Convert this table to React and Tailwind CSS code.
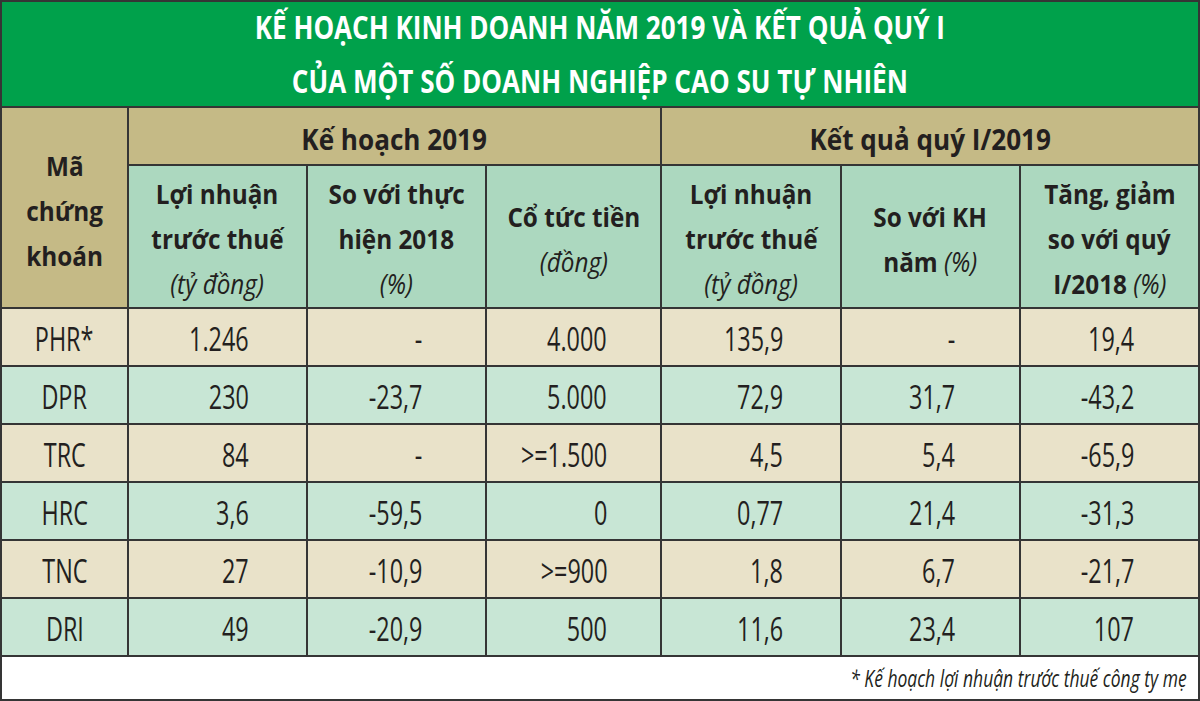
import React from "react";

const rows = [
  ["PHR*", "1.246", "-", "4.000", "135,9", "-", "19,4"],
  ["DPR", "230", "-23,7", "5.000", "72,9", "31,7", "-43,2"],
  ["TRC", "84", "-", ">=1.500", "4,5", "5,4", "-65,9"],
  ["HRC", "3,6", "-59,5", "0", "0,77", "21,4", "-31,3"],
  ["TNC", "27", "-10,9", ">=900", "1,8", "6,7", "-21,7"],
  ["DRI", "49", "-20,9", "500", "11,6", "23,4", "107"],
];

const pr = ["", "pr-[57px]", "pr-[63px]", "pr-[53px]", "pr-[57px]", "pr-[64px]", "pr-[64px]"];

function H({ children }) {
  return <span className="inline-block whitespace-nowrap scale-x-[0.9] origin-center">{children}</span>;
}

export default function App() {
  return (
    <div className="w-[1200px] h-[701px] bg-[#353535] p-[2px] font-['Open_Sans',sans-serif] text-[#231f20]">
      <div className="grid h-full gap-[2px] grid-cols-[125px_177px_177px_173px_178px_177px_177px] grid-rows-[104px_56px_141px_56px_56px_56px_56px_56px_56px_1fr]">
        <div className="col-span-7 bg-[#00a14b] flex flex-col items-center justify-center gap-[4px] text-white font-bold text-[33px] leading-[50px]">
          <span className="inline-block whitespace-nowrap scale-x-[0.79] origin-center">KẾ HOẠCH KINH DOANH NĂM 2019 VÀ KẾT QUẢ QUÝ I</span>
          <span className="inline-block whitespace-nowrap scale-x-[0.79] origin-center">CỦA MỘT SỐ DOANH NGHIỆP CAO SU TỰ NHIÊN</span>
        </div>
        <div className="row-span-2 bg-[#c5ba86] flex flex-col items-center justify-center font-bold text-[27px] leading-[45px] text-center pt-[5px]">
          <H>Mã</H>
          <H>chứng</H>
          <H>khoán</H>
        </div>
        <div className="col-span-3 bg-[#c5ba86] flex items-center justify-center font-bold text-[29px] pt-[6px]">
          <H>Kế hoạch 2019</H>
        </div>
        <div className="col-span-3 bg-[#c5ba86] flex items-center justify-center font-bold text-[29px] pt-[6px]">
          <H>Kết quả quý I/2019</H>
        </div>

        <div className="bg-[#acd8bf] flex flex-col items-center justify-center text-[27px] leading-[45px] pt-[4px]">
          <H><span className="font-bold">Lợi nhuận</span></H>
          <H><span className="font-bold">trước thuế</span></H>
          <H><span className="italic">(tỷ đồng)</span></H>
        </div>
        <div className="bg-[#acd8bf] flex flex-col items-center justify-center text-[27px] leading-[45px] pt-[4px]">
          <H><span className="font-bold">So với thực</span></H>
          <H><span className="font-bold">hiện 2018</span></H>
          <H><span className="italic">(%)</span></H>
        </div>
        <div className="bg-[#acd8bf] flex flex-col items-center justify-center text-[27px] leading-[45px] pt-[4px]">
          <H><span className="font-bold">Cổ tức tiền</span></H>
          <H><span className="italic">(đồng)</span></H>
        </div>
        <div className="bg-[#acd8bf] flex flex-col items-center justify-center text-[27px] leading-[45px] pt-[4px]">
          <H><span className="font-bold">Lợi nhuận</span></H>
          <H><span className="font-bold">trước thuế</span></H>
          <H><span className="italic">(tỷ đồng)</span></H>
        </div>
        <div className="bg-[#acd8bf] flex flex-col items-center justify-center text-[27px] leading-[45px] pt-[4px]">
          <H><span className="font-bold">So với KH</span></H>
          <H><span className="font-bold">năm </span><span className="italic">(%)</span></H>
        </div>
        <div className="bg-[#acd8bf] flex flex-col items-center justify-center text-[27px] leading-[45px] pt-[4px]">
          <H><span className="font-bold">Tăng, giảm</span></H>
          <H><span className="font-bold">so với quý</span></H>
          <H><span className="font-bold">I/2018 </span><span className="italic">(%)</span></H>
        </div>

        {rows.map((r, ri) =>
          r.map((c, ci) => (
            <div
              key={ri + "-" + ci}
              className={
                (ri % 2 === 0 ? "bg-[#e9e2c9] " : "bg-[#c8e6d5] ") +
                "flex items-center text-[32px] pt-[3px] " +
                (ci === 0 ? "justify-center" : "justify-end " + pr[ci])
              }
            >
              <span
                className={
                  "inline-block whitespace-nowrap scale-x-[0.73] " +
                  (ci === 0 ? "origin-center" : "origin-right")
                }
              >
                {c}
              </span>
            </div>
          ))
        )}

        <div className="col-span-7 bg-white flex items-center justify-end pr-[11px] italic text-[23px]">
          <span className="inline-block whitespace-nowrap scale-x-[0.76] origin-right">
            * Kế hoạch lợi nhuận trước thuế công ty mẹ
          </span>
        </div>
      </div>
    </div>
  );
}
